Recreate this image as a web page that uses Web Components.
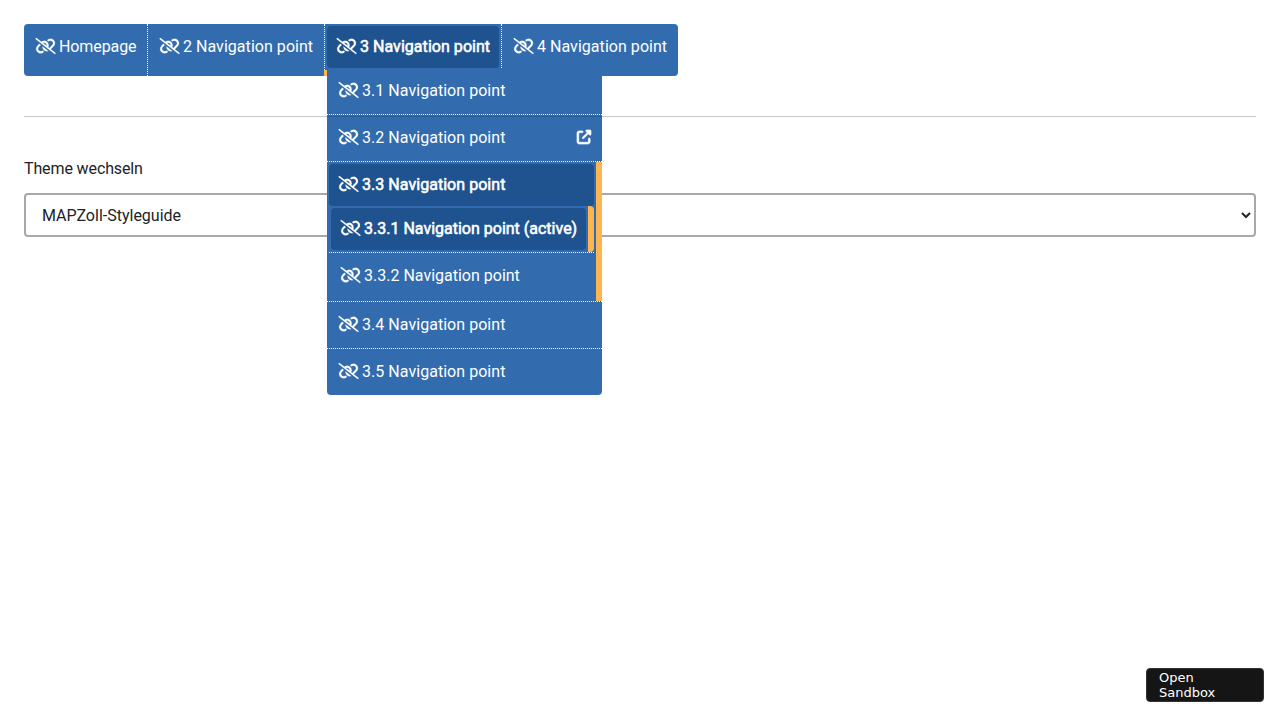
<!DOCTYPE html>
<html lang="de">
<head>
<meta charset="utf-8">
<title>Navigation</title>
<style>
body { margin: 0; font: 16px/24px Roboto, sans-serif; color: #202328; background: #fff; }
</style>
</head>
<body>
<demo-page></demo-page>
<script>
const define = (name, html) => {
  const tpl = document.createElement('template');
  tpl.innerHTML = html;
  customElements.define(name, class extends HTMLElement {
    constructor() {
      super();
      this.attachShadow({ mode: 'open' }).append(tpl.content.cloneNode(true));
    }
  });
};

define('link-slash-icon', `
<style>:host{display:block;width:20px;height:16px;flex:none;margin-bottom:2px}svg{display:block;overflow:visible}</style>
<svg width="20" height="16" viewBox="-18 0 640 512" fill="currentColor" stroke="currentColor" stroke-width="5"><path d="M38.8 5.1C28.4-3.1 13.3-1.2 5.1 9.2S-1.2 34.7 9.2 42.9l592 464c10.4 8.2 25.5 6.3 33.7-4.1s6.3-25.5-4.1-33.7L489.3 358.2l90.5-90.5c56.5-56.5 56.5-148 0-204.5c-50-50-128.8-56.5-186.3-15.4l-1.6 1.1c-14.4 10.3-17.7 30.3-7.4 44.6s30.3 17.7 44.6 7.4l1.6-1.1c32.1-22.9 76-19.3 103.8 8.6c31.5 31.5 31.5 82.5 0 114l-96 96-31.9-25C430.9 239.6 420.1 175.1 377 132c-52.2-52.3-134.5-56.2-191.3-11.7L38.8 5.1zM239 162c30.1-14.9 67.7-9.9 92.8 15.3c20 20 27.5 48.3 21.7 74.5L239 162zM406.6 416.4L220.9 270c-2.1 39.8 12.2 80.1 42.2 110c38.9 38.9 94.4 51 143.6 36.3zm-290-228.5L60.2 244.3c-56.5 56.5-56.5 148 0 204.5c50 50 128.8 56.5 186.3 15.4l1.6-1.1c14.4-10.3 17.7-30.3 7.4-44.6s-30.3-17.7-44.6-7.4l-1.6 1.1c-32.1 22.9-76 19.3-103.8-8.6C74 372 74 321 105.5 289.5l61.8-61.8-50.6-39.9z"/></svg>`);

define('external-icon', `
<style>:host{display:block;width:14px;height:14px;flex:none;margin-bottom:2px}svg{display:block;overflow:visible}</style>
<svg width="14" height="14" viewBox="0 0 512 512" fill="currentColor" stroke="currentColor" stroke-width="24"><path d="M352 0c-12.9 0-24.6 7.8-29.6 19.8s-2.2 25.7 6.9 34.9L370.7 96 201.4 265.4c-12.5 12.5-12.5 32.8 0 45.3s32.8 12.5 45.3 0L416 141.3l41.4 41.4c9.2 9.2 22.9 11.9 34.9 6.9s19.8-16.6 19.8-29.6V32c0-17.7-14.3-32-32-32H352zM80 32C35.8 32 0 67.8 0 112V432c0 44.2 35.8 80 80 80H400c44.2 0 80-35.8 80-80V320c0-17.7-14.3-32-32-32s-32 14.3-32 32V432c0 8.8-7.2 16-16 16H80c-8.8 0-16-7.2-16-16V112c0-8.8 7.2-16 16-16H192c17.7 0 32-14.3 32-32s-14.3-32-32-32H80z"/></svg>`);

define('nav-link', `
<style>
:host{display:flex;align-items:center;box-sizing:border-box;height:46px;padding:0 11px;gap:4px;color:#fff;white-space:nowrap}
:host([active]){height:42px;margin:2px;padding:0 9px;background:#1f538f;border-radius:4px}
:host([active]) span{-webkit-text-stroke:.55px #fff}
::slotted(external-icon){margin-left:auto}
</style>
<link-slash-icon></link-slash-icon><span><slot></slot></span><slot name="end"></slot>`);

define('nav-item', `
<style>
:host{display:block;box-sizing:border-box;position:relative}
:host([column]){border-right:1px dotted #fff}
:host([row]){border-bottom:1px dotted #fff}
</style><slot></slot>`);

define('nav-menu', `
<style>
:host{display:flex;width:max-content;height:52px;background:#326cae;border-radius:4px;position:relative;z-index:1;letter-spacing:.04px}
nav-item{height:52px;width:177px}
.home{width:124px;letter-spacing:-.1px}
.end{width:176px}
.tick{position:absolute;left:-1px;top:46px;width:3px;height:6px;background:#ffb54f}
.drop{position:absolute;left:2px;top:44px;width:275px;background:#326cae;border-radius:0 0 4px 4px}
.drop nav-item{height:auto;width:auto}
.open{display:flow-root;border-right:6px solid #ffb54f}
.open>nav-link{margin-bottom:0}
.sub{margin:0 2px;letter-spacing:0}
.act{display:flow-root;border-right:6px solid #ffb54f;border-radius:0 4px 4px 0}
.deep{padding-bottom:2px}
</style>
<nav-item column class="home"><nav-link>Homepage</nav-link></nav-item>
<nav-item column><nav-link>2 Navigation point</nav-link></nav-item>
<nav-item column>
  <nav-link active>3 Navigation point</nav-link>
  <div class="tick"></div>
  <div class="drop">
    <nav-item row><nav-link>3.1 Navigation point</nav-link></nav-item>
    <nav-item row><nav-link>3.2 Navigation point<external-icon slot="end"></external-icon></nav-link></nav-item>
    <nav-item row><div class="open">
      <nav-link active>3.3 Navigation point</nav-link>
      <div class="sub">
        <nav-item row><div class="act"><nav-link active>3.3.1 Navigation point (active)</nav-link></div></nav-item>
        <nav-item class="deep"><nav-link>3.3.2 Navigation point</nav-link></nav-item>
      </div>
    </div></nav-item>
    <nav-item row><nav-link>3.4 Navigation point</nav-link></nav-item>
    <nav-item><nav-link>3.5 Navigation point</nav-link></nav-item>
  </div>
</nav-item>
<nav-item class="end"><nav-link>4 Navigation point</nav-link></nav-item>`);

define('theme-select', `
<style>
:host{display:block}
label{display:block;margin-bottom:12px;letter-spacing:-.12px}
select{display:block;width:100%;height:44px;box-sizing:border-box;border:2px solid #a8a8a8;border-radius:4px;background:#fff;color:#202328;font:inherit;padding:0 0 0 12px;margin:0}
</style>
<label for="theme">Theme wechseln</label>
<select id="theme"><option>MAPZoll-Styleguide</option></select>`);

define('sandbox-button', `
<style>
:host{position:fixed;right:16px;bottom:18px;box-sizing:border-box;width:118px;height:34px;padding:1px 12px;border:1px solid #333;border-radius:4px;background:#151515;color:#fff;font:13px/15px "DejaVu Sans",sans-serif}
</style><slot></slot>`);

define('demo-page', `
<style>
:host{display:block;box-sizing:border-box;min-height:100vh;padding:24px}
hr{position:relative;z-index:2;margin:40px 0;border:0;height:1px;background:#202328;opacity:.25}
</style>
<nav-menu></nav-menu><hr><theme-select></theme-select><sandbox-button>Open Sandbox</sandbox-button>`);
</script>
</body>
</html>
